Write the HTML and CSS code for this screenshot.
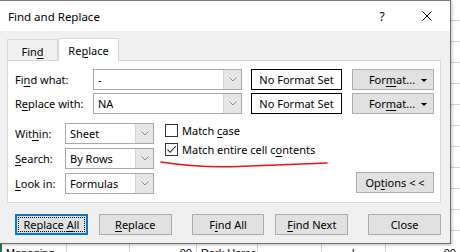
FILE: index.html
```html
<!DOCTYPE html>
<html lang="en">
<head>
    <meta charset="UTF-8">
    <title>Find and Replace</title>
    <link rel="stylesheet" href="styles.css">
</head>
<body>
<div class="screen">
    <div class="upper">
        <div class="dialog">
            <!-- title bar -->
            <div class="titlebar">
                <span class="title">Find and Replace</span>
                <span class="tb-btn help">?</span>
                <span class="tb-btn">
                    <svg width="10" height="10" viewBox="0 0 10 10"><path d="M0.5 0.5 L9.5 9.5 M9.5 0.5 L0.5 9.5" stroke="#000" stroke-width="1" fill="none"/></svg>
                </span>
            </div>

            <div class="body">
                <div class="tabs">
                    <div class="tab">Fin<u>d</u></div>
                    <div class="tab active">Re<u>p</u>lace</div>
                </div>

                <div class="panel">
                    <div class="find-grid">
                        <label>Fi<u>n</u>d what:</label>
                        <div class="combo"><span class="value">-</span><span class="arrow"><svg width="8" height="5" viewBox="0 0 8 5"><path d="M0.5 0.5 L4 4 L7.5 0.5" stroke="#8a8a8a" fill="none"/></svg></span></div>
                        <div class="format-box">No Format Set</div>
                        <button class="btn format-btn">For<u>m</u>at...<span class="tri"></span></button>

                        <label>R<u>e</u>place with:</label>
                        <div class="combo"><span class="value">NA</span><span class="arrow"><svg width="8" height="5" viewBox="0 0 8 5"><path d="M0.5 0.5 L4 4 L7.5 0.5" stroke="#8a8a8a" fill="none"/></svg></span></div>
                        <div class="format-box">No Format Set</div>
                        <button class="btn format-btn">For<u>m</u>at...<span class="tri"></span></button>
                    </div>

                    <div class="lower">
                        <div class="search-grid">
                            <label>Wit<u>h</u>in:</label>
                            <div class="combo"><span class="value">Sheet</span><span class="arrow"><svg width="8" height="5" viewBox="0 0 8 5"><path d="M0.5 0.5 L4 4 L7.5 0.5" stroke="#8a8a8a" fill="none"/></svg></span></div>
                            <label><u>S</u>earch:</label>
                            <div class="combo"><span class="value">By Rows</span><span class="arrow"><svg width="8" height="5" viewBox="0 0 8 5"><path d="M0.5 0.5 L4 4 L7.5 0.5" stroke="#8a8a8a" fill="none"/></svg></span></div>
                            <label><u>L</u>ook in:</label>
                            <div class="combo"><span class="value">Formulas</span><span class="arrow"><svg width="8" height="5" viewBox="0 0 8 5"><path d="M0.5 0.5 L4 4 L7.5 0.5" stroke="#8a8a8a" fill="none"/></svg></span></div>
                        </div>

                        <div class="checks">
                            <div class="check-row"><span class="box"></span><span>Match <u>c</u>ase</span></div>
                            <div class="check-row"><span class="box"><svg width="11" height="11" viewBox="0 0 11 11"><path d="M1.5 5.5 L4.2 8.3 L9.8 2.2" stroke="#333" stroke-width="1.1" fill="none"/></svg></span><span>Match entire cell c<u>o</u>ntents</span></div>
                        </div>

                        <button class="btn options-btn">Op<u>t</u>ions &lt; &lt;</button>
                    </div>

                    <!-- red pen mark -->
                    <svg class="scribble" width="180" height="16" viewBox="0 0 180 16">
                        <path d="M3 6 Q40 12 80 10.5 T169 7" stroke="#e8141c" stroke-width="1.6" fill="none" stroke-linecap="round"/>
                    </svg>
                </div>

                <div class="actions">
                    <button class="btn act default"><span class="focus">Replace <u>A</u>ll</span></button>
                    <button class="btn act"><u>R</u>eplace</button>
                    <button class="btn act group">F<u>i</u>nd All</button>
                    <button class="btn act"><u>F</u>ind Next</button>
                    <button class="btn act group">Close</button>
                </div>
            </div>
        </div>
        <div class="sheet-edge"></div>
    </div>

    <div class="sheet-row">
        <div class="cell c1">Managing</div>
        <div class="cell c2"></div>
        <div class="cell c3 num">00</div>
        <div class="cell c4">Dark Horse</div>
        <div class="cell c5"></div>
        <div class="cell c6">l</div>
        <div class="cell c7 num">00</div>
    </div>
</div>
</body>
</html>
```

FILE: styles.css
```css
body {
    margin: 0;
    background: #fff;
    font-family: "Noto Sans", sans-serif;
    font-size: 11px;
    color: #000;
}
u {
    text-decoration-thickness: 1px;
    text-underline-offset: 2px;
}
.screen {
    width: 460px;
    height: 252px;
    overflow: hidden;
}
.upper {
    display: flex;
    height: 243px;
}
.dialog {
    position: relative;
    z-index: 1;
    width: 450px;
    height: 242px;
    border-top: 1px solid #7a7a7a;
    border-right: 1px solid #6e6e6e;
    border-bottom: 1px solid #6e6e6e;
    box-shadow: 1px 1px 3px rgba(0, 0, 0, 0.25);
    display: flex;
    flex-direction: column;
}
.sheet-edge {
    flex: 1;
    background: repeating-linear-gradient(to bottom, #fff 0, #fff 20px, #d4d4d4 20px, #d4d4d4 21px);
}

/* title bar */
.titlebar {
    height: 30px;
    background: #fff;
    display: flex;
    align-items: center;
    font-size: 11.5px;
}
.title {
    padding-left: 8px;
    flex: 1;
}
.tb-btn {
    width: 46px;
    height: 30px;
    display: flex;
    align-items: center;
    justify-content: center;
}
.help {
    font-size: 12px;
    padding-left: 2px;
    box-sizing: border-box;
}

/* body */
.body {
    flex: 1;
    background: #f0f0f0;
    padding: 7px 9px 0 7px;
}
.tabs {
    display: flex;
    align-items: flex-end;
    height: 22px;
}
.tab {
    width: 51px;
    height: 21px;
    box-sizing: border-box;
    border: 1px solid #d9d9d9;
    border-bottom: none;
    display: flex;
    align-items: center;
    justify-content: center;
    padding-top: 2px;
}
.tab.active {
    width: 61px;
    height: 23px;
    background: #fff;
    position: relative;
    z-index: 1;
    margin-bottom: -1px;
    padding-top: 0;
}
.panel {
    position: relative;
    background: #fff;
    border: 1px solid #d9d9d9;
    padding: 8px 6px 8px 7px;
}

/* top fields */
.find-grid {
    display: grid;
    grid-template-columns: 78px 149px 9px 91px 10px 82px;
    row-gap: 3px;
    grid-auto-rows: 21px;
    align-items: center;
}
.find-grid label {
    grid-column: 1;
}
.find-grid .format-box {
    grid-column: 4;
}
.find-grid .format-btn {
    grid-column: 6;
}
label {
    line-height: 21px;
}
.combo {
    height: 21px;
    box-sizing: border-box;
    border: 1px solid #a8a8a8;
    display: flex;
    background: #fff;
}
.combo .value {
    flex: 1;
    padding-left: 4px;
    line-height: 19px;
}
.combo .arrow {
    width: 17px;
    background: #e6e6e6;
    border-left: 1px solid #d6d6d6;
    display: flex;
    align-items: center;
    justify-content: center;
}
.format-box {
    height: 21px;
    box-sizing: border-box;
    border: 1px solid #000;
    display: flex;
    align-items: center;
    justify-content: center;
}
.btn {
    font-family: inherit;
    font-size: 11px;
    color: #000;
    background: #e1e1e1;
    border: 1px solid #adadad;
    height: 21px;
    padding: 0;
    box-sizing: border-box;
    cursor: pointer;
}
.format-btn {
    position: relative;
    width: 82px;
    padding-right: 2px;
}
.tri {
    position: absolute;
    right: 6px;
    top: 9px;
    width: 0;
    height: 0;
    border-left: 3px solid transparent;
    border-right: 3px solid transparent;
    border-top: 3px solid #000;
}

/* within / search / look in */
.lower {
    display: flex;
    margin-top: 9px;
}
.search-grid {
    display: grid;
    grid-template-columns: 50px 89px;
    grid-auto-rows: 21px;
    row-gap: 4px;
    align-items: center;
}
.checks {
    margin-left: 11px;
    padding-top: 1px;
}
.check-row {
    display: flex;
    align-items: center;
    height: 13px;
    margin-bottom: 6px;
}
.box {
    width: 13px;
    height: 13px;
    box-sizing: border-box;
    border: 1px solid #333;
    margin-right: 4px;
    display: flex;
    align-items: center;
    justify-content: center;
}
.options-btn {
    width: 78px;
    margin-left: auto;
    align-self: flex-end;
    margin-bottom: 1px;
}
.scribble {
    position: absolute;
    left: 150px;
    top: 95px;
}

/* bottom buttons */
.actions {
    display: flex;
    margin-top: 11px;
    padding-left: 8px;
}
.act {
    width: 73px;
    margin-left: 11px;
}
.act:first-child {
    margin-left: 0;
}
.act.group {
    margin-left: 20px;
}
.act.default {
    border: 2px solid #0078d7;
    padding: 1px;
}
.focus {
    display: block;
    height: 100%;
    line-height: 13px;
    box-sizing: border-box;
    border: 1px dotted #000;
}

/* spreadsheet strip below */
.sheet-row {
    display: flex;
    height: 9px;
    overflow: hidden;
    border-left: 2px solid #217346;
    font-family: "Liberation Sans", sans-serif;
    font-size: 11px;
}
.cell {
    box-sizing: border-box;
    border-right: 1px solid #d4d4d4;
    padding: 3px 4px 0 4px;
    line-height: 14px;
    white-space: nowrap;
    overflow: hidden;
}
.cell.num {
    text-align: right;
}
.c1 { width: 65px; }
.c2 { width: 63px; }
.c3 { width: 67px; }
.c4 { width: 61px; }
.c5 { width: 64px; }
.c6 { width: 64px; padding-left: 30px; }
.c7 { flex: 1; border-right: none; }
```
